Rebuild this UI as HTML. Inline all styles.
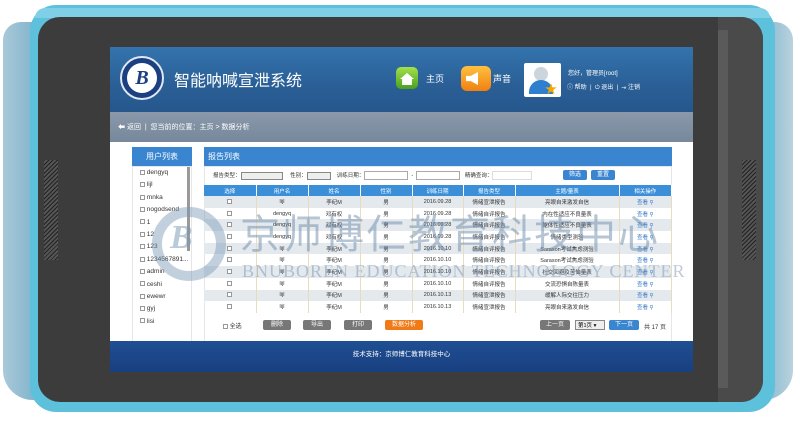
<!DOCTYPE html>
<html><head><meta charset="utf-8"><style>
*{margin:0;padding:0;box-sizing:border-box}
body{width:800px;height:425px;background:#fff;position:relative;overflow:hidden;font-family:"Liberation Sans","Noto Sans CJK SC",sans-serif}
.a{position:absolute}
.grill{background:repeating-linear-gradient(135deg,#222 0 1px,#555 1px 3px)}
table{border-collapse:collapse;font-size:5.5px;color:#333}
td{text-align:center;height:11.7px;border-right:1px solid #e8dcc0;padding:0}
tr:nth-child(even) td{background:#e4e9ee}
th{background:#3a8fd8;color:#fff;font-weight:normal;height:11px;border-right:1px solid #fff}
.cb{display:inline-block;width:5px;height:5px;border:1px solid #999;background:#fff;vertical-align:middle}
.lk{color:#3a7cc8}
.ul div{height:12.4px;font-size:6.5px;color:#333;padding-left:8px}
.btn{position:absolute;height:10px;font-size:6px;color:#fff;text-align:center;line-height:10px;border-radius:2px}
</style></head><body>
<div class="a" style="left:3px;top:22px;width:50px;height:378px;background:linear-gradient(90deg,#a9c9d9,#6ba8c4);border-radius:18px 0 0 30px"></div>
<div class="a" style="left:745px;top:22px;width:48px;height:378px;background:linear-gradient(90deg,#6ba8c4,#b8d2de);border-radius:0 18px 30px 0"></div>
<div class="a" style="left:30px;top:5px;width:745px;height:407px;background:#5ec1dc;border-radius:26px"></div>
<div class="a" style="left:35px;top:8px;width:735px;height:10px;background:#7fd0e6;border-radius:20px 20px 0 0"></div>
<div class="a" style="left:38px;top:17px;width:725px;height:385px;background:#3c3c3c;border-radius:22px"></div>
<div class="a" style="left:718px;top:17px;width:45px;height:385px;background:#4a4a4a;border-radius:0 22px 22px 0"></div>
<div class="a" style="left:718px;top:30px;width:10px;height:358px;background:#5a5a5a"></div>
<div class="a grill" style="left:44px;top:160px;width:14px;height:100px"></div>
<div class="a grill" style="left:742px;top:160px;width:14px;height:100px"></div>
<div class="a" style="left:110px;top:47px;width:583px;height:325px;background:#fff;overflow:hidden">
 <div class="a" style="left:0;top:0;width:583px;height:65px;background:linear-gradient(180deg,#3473ad,#2a5f96 60%,#25578c)"></div>
 <div class="a" style="left:10px;top:9px;width:44px;height:44px;border-radius:50%;background:#1b3f80;border:2px solid #dfe8f4"></div>
 <div class="a" style="left:17px;top:16px;width:30px;height:30px;border-radius:50%;background:#fff;color:#1b3f80;font:italic bold 20px 'Liberation Serif',serif;text-align:center;line-height:30px">B</div>
 <div class="a" style="left:64px;top:20px;color:#fff;font-size:16px">智能呐喊宣泄系统</div>
 <div class="a" style="left:286px;top:20px;width:22px;height:22px;border-radius:5px;background:linear-gradient(#a5e04a,#4aa01e)"></div>
 <div class="a" style="left:290px;top:26px;width:14px;height:12px;background:#fff;clip-path:polygon(50% 0,100% 50%,85% 50%,85% 100%,15% 100%,15% 50%,0 50%)"></div>
 <div class="a" style="left:316px;top:25px;color:#fff;font-size:9px">主页</div>
 <div class="a" style="left:351px;top:19px;width:30px;height:25px;border-radius:6px;background:linear-gradient(#ffc040,#f08010)"></div>
 <div class="a" style="left:356px;top:25px;width:12px;height:13px;background:#fff;clip-path:polygon(0 30%,40% 30%,100% 0,100% 100%,40% 70%,0 70%)"></div>
 <div class="a" style="left:383px;top:25px;color:#fff;font-size:9px">声音</div>
 <div class="a" style="left:414px;top:16px;width:37px;height:34px;background:#fff;border-radius:2px"></div>
 <div class="a" style="left:424px;top:20px;width:14px;height:14px;border-radius:50%;background:#ccd4dc"></div>
 <div class="a" style="left:419px;top:33px;width:24px;height:14px;border-radius:12px 12px 0 0;background:#2f7fcf"></div>
 <div class="a" style="left:435px;top:36px;color:#f5a700;font-size:12px;line-height:12px">★</div>
 <div class="a" style="left:458px;top:21px;color:#fff;font-size:6px">您好，管理员[root]</div>
 <div class="a" style="left:457px;top:35px;color:#fff;font-size:6px;white-space:nowrap">ⓘ 帮助 &nbsp;|&nbsp; ⏻ 退出 &nbsp;|&nbsp; ⇥ 注销</div>
 <div class="a" style="left:0;top:65px;width:583px;height:30px;background:linear-gradient(180deg,#8a98aa,#77889c)"></div>
 <div class="a" style="left:8px;top:75px;color:#fff;font-size:7px">⬅ 返回 &nbsp;| &nbsp;您当前的位置：主页 &gt; 数据分析</div>
 <div class="a" style="left:22px;top:100px;width:60px;height:19px;background:#3a85d0;color:#fff;font-size:8px;text-align:center;line-height:19px">用户列表</div>
 <div class="a" style="left:22px;top:119px;width:60px;height:196px;border:1px solid #e6e6e6"></div>
 <div class="a" style="left:77px;top:120px;width:3px;height:84px;background:#999"></div>
 <div class="a ul" style="left:22px;top:122px">
  <div><span class="cb"></span> dengyq</div><div><span class="cb"></span> lijl</div><div><span class="cb"></span> mnka</div><div><span class="cb"></span> nogodsend</div><div><span class="cb"></span> 1</div><div><span class="cb"></span> 12</div><div><span class="cb"></span> 123</div><div><span class="cb"></span> 1234567891...</div><div><span class="cb"></span> admin</div><div><span class="cb"></span> ceshi</div><div><span class="cb"></span> ewewr</div><div><span class="cb"></span> gyj</div><div><span class="cb"></span> lisi</div>
 </div>
 <div class="a" style="left:94px;top:100px;width:468px;height:19px;background:#3a85d0;color:#fff;font-size:8px;padding-left:4px;line-height:19px">报告列表</div>
 <div class="a" style="left:94px;top:119px;width:468px;height:196px;border:1px solid #e6e6e6"></div>
 <div class="a" style="left:103px;top:124px;font-size:5.5px;color:#333;white-space:nowrap">报告类型：<span style="display:inline-block;width:42px;height:8px;border:1px solid #888;background:#eee;vertical-align:middle"></span> &nbsp;&nbsp;&nbsp; 性别：<span style="display:inline-block;width:24px;height:8px;border:1px solid #888;background:#eee;vertical-align:middle"></span> &nbsp;&nbsp; 训练日期：<span style="display:inline-block;width:44px;height:9px;border:1px solid #aaa;vertical-align:middle"></span> &nbsp;-&nbsp; <span style="display:inline-block;width:44px;height:9px;border:1px solid #aaa;vertical-align:middle"></span> &nbsp; 精确查询：<span style="display:inline-block;width:40px;height:9px;border:1px solid #ddd;vertical-align:middle"></span></div>
 <div class="btn" style="left:453px;top:123px;width:24px;background:#3a85d0">筛选</div>
 <div class="btn" style="left:481px;top:123px;width:24px;background:#3a85d0">重置</div>
 <table class="a" style="left:94px;top:138px;width:468px">
  <tr><th style="width:52px">选择</th><th style="width:52px">用户名</th><th style="width:52px">姓名</th><th style="width:52px">性别</th><th style="width:51px">训练日期</th><th style="width:52px">报告类型</th><th style="width:104px">主题/量表</th><th>相关操作</th></tr>
  <tr><td><span class="cb"></span></td><td>lijl</td><td>李纪M</td><td>男</td><td>2016.09.28</td><td>情绪宣泄报告</td><td>亮眼自来激发自信</td><td class="lk">查看 ⚲</td></tr>
  <tr><td><span class="cb"></span></td><td>dengyq</td><td>邓有权</td><td>男</td><td>2016.09.28</td><td>情绪自评报告</td><td>内在性适应不良量表</td><td class="lk">查看 ⚲</td></tr>
  <tr><td><span class="cb"></span></td><td>dengyq</td><td>邓有权</td><td>男</td><td>2016.09.28</td><td>情绪自评报告</td><td>躯体性适应不良量表</td><td class="lk">查看 ⚲</td></tr>
  <tr><td><span class="cb"></span></td><td>dengyq</td><td>邓有权</td><td>男</td><td>2016.09.28</td><td>情绪自评报告</td><td>情绪类型测验</td><td class="lk">查看 ⚲</td></tr>
  <tr><td><span class="cb"></span></td><td>lijl</td><td>李纪M</td><td>男</td><td>2016.10.10</td><td>情绪自评报告</td><td>Sarason考试焦虑测验</td><td class="lk">查看 ⚲</td></tr>
  <tr><td><span class="cb"></span></td><td>lijl</td><td>李纪M</td><td>男</td><td>2016.10.10</td><td>情绪自评报告</td><td>Sarason考试焦虑测验</td><td class="lk">查看 ⚲</td></tr>
  <tr><td><span class="cb"></span></td><td>lijl</td><td>李纪M</td><td>男</td><td>2016.10.10</td><td>情绪自评报告</td><td>社交回避及苦恼量表</td><td class="lk">查看 ⚲</td></tr>
  <tr><td><span class="cb"></span></td><td>lijl</td><td>李纪M</td><td>男</td><td>2016.10.10</td><td>情绪自评报告</td><td>交流恐惧自陈量表</td><td class="lk">查看 ⚲</td></tr>
  <tr><td><span class="cb"></span></td><td>lijl</td><td>李纪M</td><td>男</td><td>2016.10.13</td><td>情绪宣泄报告</td><td>缓解人际交往压力</td><td class="lk">查看 ⚲</td></tr>
  <tr><td><span class="cb"></span></td><td>lijl</td><td>李纪M</td><td>男</td><td>2016.10.13</td><td>情绪宣泄报告</td><td>亮眼自来激发自信</td><td class="lk">查看 ⚲</td></tr>
 </table>
 <div class="a" style="left:113px;top:274px;font-size:6px;color:#333"><span class="cb"></span> 全选</div>
 <div class="btn" style="left:153px;top:273px;width:28px;background:#777">删除</div>
 <div class="btn" style="left:193px;top:273px;width:28px;background:#777">导出</div>
 <div class="btn" style="left:234px;top:273px;width:28px;background:#777">打印</div>
 <div class="btn" style="left:275px;top:273px;width:38px;background:#f07a18">数据分析</div>
 <div class="btn" style="left:430px;top:273px;width:30px;background:#777">上一页</div>
 <div class="a" style="left:465px;top:273px;width:30px;height:10px;border:1px solid #888;background:#eee;font-size:5.5px;padding-left:2px">第1页 ▾</div>
 <div class="btn" style="left:499px;top:273px;width:30px;background:#3a85d0">下一页</div>
 <div class="a" style="left:534px;top:275px;font-size:6px;color:#333">共 17 页</div>
 <div class="a" style="left:0;top:294px;width:583px;height:31px;background:linear-gradient(180deg,#1f4f93,#183f80)"></div>
 <div class="a" style="left:0;top:301px;width:583px;text-align:center;color:#fff;font-size:6.5px">技术支持：京师博仁教育科技中心</div>
 <div class="a" style="left:42px;top:160px;width:74px;height:74px;border-radius:50%;border:10px solid rgba(120,150,180,.45)"></div>
 <div class="a" style="left:60px;top:172px;color:rgba(120,150,180,.5);font:italic bold 34px 'Liberation Serif',serif">B</div>
 <div class="a" style="left:130px;top:166px;color:rgba(110,140,170,.5);font-size:40px;letter-spacing:2px;white-space:nowrap;line-height:44px">京师博仁教育科技中心</div>
 <div class="a" style="left:132px;top:214px;color:rgba(110,140,170,.45);font:18px 'Liberation Serif',serif;letter-spacing:1px;white-space:nowrap">BNUBOREN EDUCATION TECHNOLOGY CENTER</div>
</div>
</body></html>
